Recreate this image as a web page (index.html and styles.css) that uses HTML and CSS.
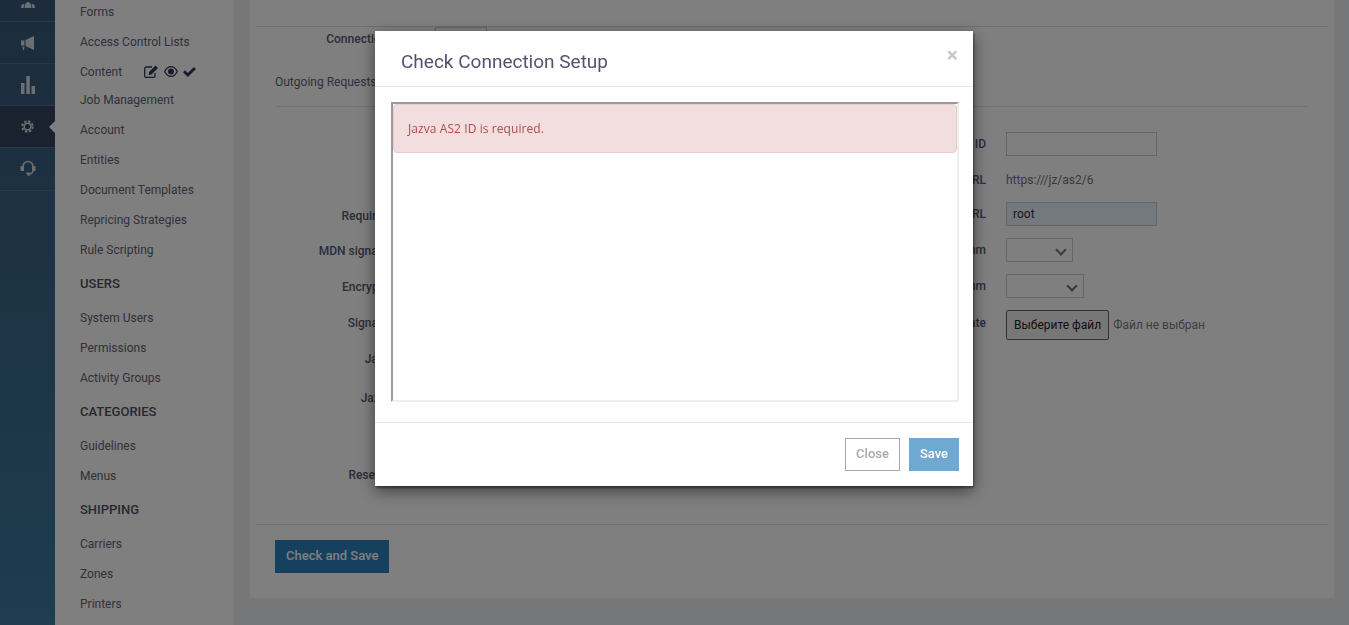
FILE: index.html
```html
<!DOCTYPE html>
<html lang="en">
<head>
    <meta charset="UTF-8">
    <title>AS2 Connection Setup</title>
    <link rel="stylesheet" href="styles.css">
</head>
<body>
    <div class="app">
        <!-- icon rail -->
        <nav class="rail">
            <div class="rail-item rail-first">
                <svg width="14" height="8" viewBox="0 0 14 8"><path fill="currentColor" d="M3.500 8c0-4 1.500-6 3.500-6s3.500 2 3.500 6zM0 8c0-2.500 1-4 2.500-4 .5 0 .9.200 1 .5C3 5.500 2.800 6.500 2.800 8zM14 8c0-2.500-1-4-2.500-4-.5 0-.9.200-1 .5.500 1 .7 2 .7 3.500z"/></svg>
            </div>
            <div class="rail-item">
                <svg width="16" height="16" viewBox="0 0 16 16"><path fill="currentColor" d="M1 5.500h3.500v5H1zM5.500 5 14 1v14l-8.500-4zM2.500 11.500h2L4 15H3z"/></svg>
            </div>
            <div class="rail-item">
                <svg width="14" height="18" viewBox="0 0 14 18"><path fill="currentColor" d="M0 7h3.500v11H0zM5.300 0h3.500v18H5.300zM10.500 10H14v8h-3.500z"/></svg>
            </div>
            <div class="rail-item active">
                <svg width="13" height="13" viewBox="0 0 16 16"><circle cx="8" cy="8" r="4" fill="none" stroke="currentColor" stroke-width="1.700"/><circle cx="8" cy="8" r="6.300" fill="none" stroke="currentColor" stroke-width="2.600" stroke-dasharray="2.950 2"/></svg>
            </div>
            <div class="rail-item rail-last">
                <svg width="16" height="18" viewBox="0 0 16 18"><path fill="none" stroke="currentColor" stroke-width="1.500" d="M3 7V6.500a5 5 0 0 1 10 0V7M13 10c0 2.500-1.500 4-4 4"/><path fill="currentColor" d="M.5 7c0-.5.500-1 1-1H4v5H1.500c-.5 0-1-.5-1-1zM12 6h2.500c.5 0 1 .5 1 1v3c0 .5-.5 1-1 1H12zM6 12.500h3.500V16H8z"/></svg>
            </div>
        </nav>

        <aside class="sidebar">
            <a class="side-link">Forms</a>
            <a class="side-link">Access Control Lists</a>
            <a class="side-link side-content">Content
                <span class="content-icons">
                    <svg width="15" height="13" viewBox="0 0 15 13"><path fill="none" stroke="currentColor" stroke-width="1.300" d="M11 8v3a1.300 1.300 0 0 1-1.300 1.300H2A1.300 1.300 0 0 1 .7 11V3.300A1.300 1.300 0 0 1 2 2h6"/><path fill="currentColor" d="M5 7l6.500-6.500 2.500 2.500L7.500 9.500 4.700 10z"/></svg>
                    <svg width="14" height="11" viewBox="0 0 14 11"><path fill="currentColor" fill-rule="evenodd" d="M7 0c3 0 5.500 2 7 5.500C12.500 9 10 11 7 11S1.500 9 0 5.500C1.500 2 4 0 7 0zm0 1.200C4.700 1.200 2.700 2.700 1.400 5.500 2.700 8.300 4.700 9.800 7 9.800s4.300-1.500 5.600-4.300C11.300 2.700 9.300 1.200 7 1.200zM7 2.500a3 3 0 1 1 0 6 3 3 0 0 1 0-6z"/></svg>
                    <svg width="13" height="10" viewBox="0 0 13 10"><path fill="currentColor" d="M0 5.300l2-2 2.800 2.800L11 0l2 2-8.200 8z"/></svg>
                </span>
            </a>
            <a class="side-link side-short">Job Management</a>
            <a class="side-link">Account</a>
            <a class="side-link">Entities</a>
            <a class="side-link">Document Templates</a>
            <a class="side-link">Repricing Strategies</a>
            <a class="side-link">Rule Scripting</a>
            <h4 class="side-title">USERS</h4>
            <a class="side-link">System Users</a>
            <a class="side-link">Permissions</a>
            <a class="side-link">Activity Groups</a>
            <h4 class="side-title">CATEGORIES</h4>
            <a class="side-link">Guidelines</a>
            <a class="side-link">Menus</a>
            <h4 class="side-title">SHIPPING</h4>
            <a class="side-link">Carriers</a>
            <a class="side-link">Zones</a>
            <a class="side-link">Printers</a>
        </aside>

        <main class="main">
            <div class="panel">
                <div class="connection-row">
                    <label class="form-label">Connection Status</label>
                    <div class="connection-box"></div>
                </div>
                <div class="tabs-row">Outgoing Requests</div>
                <div class="form-cols">
                    <div class="form-col">
                        <div class="form-row h-36"></div>
                        <div class="form-row h-36"></div>
                        <div class="form-row h-36"><label class="form-label">Required MDN?</label></div>
                        <div class="form-row h-34"><label class="form-label">MDN signature type</label></div>
                        <div class="form-row h-38"><label class="form-label">Encryption Key:</label></div>
                        <div class="form-row h-34"><label class="form-label">Signature Key:</label></div>
                        <div class="form-row h-38"><label class="form-label">Jazva Keys</label></div>
                        <div class="form-row h-40"><label class="form-label">Jazva Alias:</label></div>
                        <div class="form-row h-38"></div>
                        <div class="form-row h-38"><label class="form-label">Reset Number</label></div>
                    </div>
                    <div class="form-col">
                        <div class="form-row h-36"><label class="form-label right">Receiver ID</label><input class="text-input" type="text"></div>
                        <div class="form-row h-35"><label class="form-label right">URL</label><span class="plain-value">https:///jz/as2/6</span></div>
                        <div class="form-row h-34"><label class="form-label right">URL</label><input class="text-input filled" type="text" value="root"></div>
                        <div class="form-row h-38"><label class="form-label right">Algorithm</label><div class="fake-select s-67"></div></div>
                        <div class="form-row h-34"><label class="form-label right">Algorithm</label><div class="fake-select s-78"></div></div>
                        <div class="form-row h-44"><label class="form-label right raised">Certificate</label><button class="file-btn">Выберите файл</button><span class="file-none">Файл не выбран</span></div>
                    </div>
                </div>
                <div class="panel-footer">
                    <button class="check-btn">Check and Save</button>
                </div>
            </div>
        </main>
    </div>

    <div class="backdrop"></div>

    <div class="modal">
        <div class="modal-header">
            <h3 class="modal-title">Check Connection Setup</h3>
            <span class="modal-close">×</span>
        </div>
        <div class="modal-body">
            <div class="frame">
                <div class="alert">Jazva AS2 ID is required.</div>
            </div>
        </div>
        <div class="modal-footer">
            <button class="btn-close">Close</button>
            <button class="btn-save">Save</button>
        </div>
    </div>
</body>
</html>
```

FILE: styles.css
```css
* {
    box-sizing: border-box;
}
html, body {
    height: 100%;
}
body {
    margin: 0;
    overflow: hidden;
    font-family: Roboto, sans-serif;
    font-size: 12px;
    color: #3d3d4e;
    background-color: #eef0f4;
}
.app {
    display: flex;
    height: 625px;
}

/* rail */
.rail {
    width: 55px;
    flex-shrink: 0;
    background: linear-gradient(#385878, #3c7a9e);
    color: #d8dce0;
}
.rail-item {
    height: 42px;
    display: flex;
    align-items: center;
    justify-content: center;
    border-bottom: 1px solid #56708f;
    position: relative;
}
.rail-first {
    height: 22px;
    align-items: flex-end;
    padding-bottom: 13px;
    overflow: hidden;
}
.rail-last {
    height: 43px;
}
.rail-item.active {
    background-color: #34435f;
}
.rail-item.active::after {
    content: "";
    position: absolute;
    right: 0;
    top: 15px;
    border: 6px solid transparent;
    border-right-color: #fff;
    border-left-width: 0;
}

/* sidebar */
.sidebar {
    width: 180px;
    flex-shrink: 0;
    padding-left: 25px;
    background-color: #fff;
    border-right: 1px solid #e6e6e6;
}
.side-link {
    display: flex;
    align-items: center;
    height: 30px;
    padding-top: 1px;
    color: #626276;
}
.side-link:first-child {
    height: 26px;
    align-items: flex-end;
    padding-bottom: 7px;
}
.side-short {
    height: 28px;
    padding-top: 0;
}
.content-icons {
    display: inline-flex;
    align-items: center;
    gap: 5px;
    margin-left: 22px;
    color: #2e3a55;
}
.side-title {
    margin: 0;
    height: 38px;
    display: flex;
    align-items: center;
    font-size: 13px;
    font-weight: 500;
    color: #505064;
}

/* main */
.main {
    flex: 1;
    padding: 0 15px 27px 15px;
    background-color: #eceef2;
}
.panel {
    height: 598px;
    padding: 26px 6px 0 6px;
    background-color: #fff;
    position: relative;
}
.connection-row {
    height: 36px;
    display: flex;
    border-top: 1px solid #ddd;
}
.connection-row .form-label {
    padding-top: 5px;
}
.connection-box {
    width: 52px;
    height: 30px;
    margin-left: 10px;
    border: 1px solid #ccc;
    border-bottom: 0;
}
.tabs-row {
    height: 45px;
    margin: 0 20px 0 19px;
    padding-top: 13px;
    border-bottom: 1px solid #e5e5e5;
    color: #626276;
}
.form-cols {
    display: flex;
    height: 417px;
    padding-top: 19px;
}
.form-col {
    width: 50%;
}
.form-col + .form-col {
    padding-left: 5px;
}
.form-row {
    display: flex;
    align-items: center;
}
.h-34 {
    height: 34px;
}
.h-35 {
    height: 35px;
}
.h-36 {
    height: 36px;
}
.h-38 {
    height: 38px;
}
.h-40 {
    height: 40px;
}
.h-44 {
    height: 44px;
}
.form-label {
    width: 169px;
    flex-shrink: 0;
    text-align: right;
    font-weight: 500;
    color: #5a5a70;
}
.form-label.right {
    width: 189px;
    margin-right: 20px;
}
.form-label.raised {
    padding-bottom: 5px;
}
.text-input {
    width: 151px;
    height: 24px;
    padding: 0 6px;
    border: 1px solid #ccc;
    background-color: #fff;
    font: 12px Roboto, sans-serif;
    color: #333;
}
.text-input.filled {
    background-color: #e8f0fe;
}
.plain-value {
    color: #72727e;
}
.fake-select {
    height: 24px;
    border: 1px solid #ccc;
    position: relative;
}
.fake-select::after {
    content: "";
    position: absolute;
    right: 7px;
    top: 7px;
    width: 6px;
    height: 6px;
    border-right: 2px solid #777;
    border-bottom: 2px solid #777;
    transform: rotate(45deg);
}
.s-67 {
    width: 67px;
}
.s-78 {
    width: 78px;
}
.file-btn {
    height: 30px;
    padding: 0 7px;
    border: 1px solid #666;
    border-radius: 2px;
    background-color: #efefef;
    font: 12px Roboto, sans-serif;
    color: #222;
}
.file-none {
    margin-left: 4px;
    color: #7a7c86;
}
.panel-footer {
    padding: 15px 19px;
    border-top: 1px solid #ddd;
}
.check-btn {
    height: 33px;
    padding: 0 11px 2px;
    border: 0;
    background-color: #2a80bc;
    font: 500 13px Roboto, sans-serif;
    color: #fff;
}

/* modal */
.backdrop {
    position: fixed;
    inset: 0;
    background-color: rgba(0, 0, 0, 0.5);
}
.modal {
    position: fixed;
    left: 375px;
    top: 31px;
    width: 598px;
    height: 455px;
    display: flex;
    flex-direction: column;
    background-color: #fff;
    box-shadow: 1px 2px 2px rgba(0, 0, 0, 0.4), 0 5px 15px rgba(0, 0, 0, 0.5);
}
.modal-header {
    height: 56px;
    display: flex;
    align-items: center;
    justify-content: space-between;
    padding: 0 15px 0 26px;
    border-bottom: 1px solid #e5e5e5;
}
.modal-title {
    margin: 5px 0 0 0;
    font-size: 19px;
    font-weight: 400;
    color: #55526f;
}
.modal-close {
    margin: -8px 0 0 0;
    font-size: 21px;
    font-weight: 700;
    color: #c8c8c8;
}
.modal-body {
    height: 336px;
    padding: 15px 14px 0 16px;
    border-bottom: 1px solid #e5e5e5;
}
.frame {
    height: 300px;
    border: 2px solid;
    border-color: #9a9a9a #eee #eee #9a9a9a;
}
.alert {
    height: 49px;
    line-height: 47px;
    padding-left: 14px;
    background-color: #f2dede;
    border: 1px solid #ebccd1;
    border-radius: 4px;
    font-family: "Open Sans", sans-serif;
    font-size: 12px;
    letter-spacing: 0.08px;
    color: #ad4f4d;
}
.modal-footer {
    flex: 1;
    display: flex;
    justify-content: flex-end;
    align-items: flex-start;
    gap: 9px;
    padding: 15px 14px 0 0;
}
.btn-close, .btn-save {
    height: 33px;
    padding: 0 0 2px;
    font: 500 13px Roboto, sans-serif;
}
.btn-close {
    width: 55px;
    border: 1px solid #a9a9a9;
    background-color: #fff;
    color: #a9a9a9;
}
.btn-save {
    width: 50px;
    border: 0;
    background-color: #6fa8d0;
    color: #fff;
}
```
